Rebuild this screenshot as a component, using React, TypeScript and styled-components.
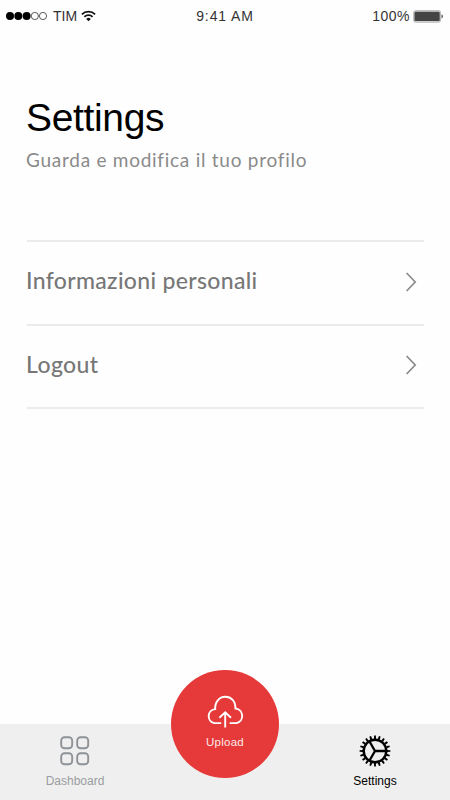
import React from "react";
import styled, { createGlobalStyle } from "styled-components";

const GlobalStyle = createGlobalStyle`
  * { box-sizing: border-box; }
  body { margin: 0; background: #fefefe; }
`;

const Screen = styled.div`
  width: 450px;
  height: 800px;
  display: flex;
  flex-direction: column;
  overflow: hidden;
  background: #fefefe;
  font-family: "Liberation Sans", Arial, sans-serif;
  color: #000;
`;

const StatusBar = styled.header`
  height: 32px;
  padding: 0 6px;
  display: grid;
  grid-template-columns: 1fr auto 1fr;
  align-items: center;
  font-size: 14px;
  line-height: 32px;
  color: #333;
`;

const StatusGroup = styled.div<{ $end?: boolean }>`
  display: flex;
  align-items: center;
  justify-content: ${(p) => (p.$end ? "flex-end" : "flex-start")};
`;

const StatusText = styled.span<{ $spacing: number }>`
  letter-spacing: ${(p) => p.$spacing}px;
`;

const Carrier = styled(StatusText)`
  margin: 0 4px 0 6px;
`;

const Battery = styled.svg`
  margin-left: 3px;
`;

const Heading = styled.div`
  padding: 62px 26px 0;
  height: 208px;
`;

const Title = styled.h1`
  margin: 0;
  font-size: 39px;
  line-height: 48px;
  font-weight: 400;
  letter-spacing: -0.35px;
`;

const Subtitle = styled.p`
  margin: 6px 0 0;
  font: 400 19px/24px Lato, sans-serif;
  letter-spacing: 0.74px;
  color: #8a8a8a;
`;

const List = styled.ul`
  list-style: none;
  margin: 0 26px 0 27px;
  padding: 0;
  flex: 1;
`;

const Item = styled.li`
  height: 83.5px;
  border-top: 2px solid #ebebeb;
  display: flex;
  align-items: center;
  justify-content: space-between;
  padding: 0 7px 2px 0;
  &:last-child {
    height: 85.5px;
    border-bottom: 2px solid #ebebeb;
  }
`;

const ItemLabel = styled.span<{ $spacing: number }>`
  margin: -3px 0 0 -1px;
  font: 500 23px/28px Lato, sans-serif;
  letter-spacing: ${(p) => p.$spacing}px;
  color: #777;
`;

const TabBar = styled.nav`
  height: 76px;
  background: #efefef;
  display: grid;
  grid-template-columns: repeat(3, 1fr);
  justify-items: center;
`;

const Tab = styled.div<{ $active?: boolean }>`
  display: flex;
  flex-direction: column;
  align-items: center;
  padding-top: 11px;
  color: ${(p) => (p.$active ? "#000" : "#9a9da0")};
`;

const TabLabel = styled.span<{ $spacing: number }>`
  font-size: 12px;
  line-height: 16px;
  margin-top: 6px;
  letter-spacing: ${(p) => p.$spacing}px;
`;

const UploadButton = styled.div`
  width: 108px;
  height: 108px;
  margin-top: -54.5px;
  border-radius: 50%;
  background: #e53a39;
  color: #fff;
  display: flex;
  flex-direction: column;
  align-items: center;
  padding-top: 25.5px;
`;

const UploadLabel = styled.span`
  font-size: 11.5px;
  line-height: 16px;
  margin-top: 5px;
  letter-spacing: 0.25px;
  color: #fde8e8;
`;

const SignalDots = () => (
  <svg width="41" height="10" viewBox="0 0 41 10">
    {[4, 12.3, 20.6].map((x) => (
      <circle key={x} cx={x} cy="5" r="4" fill="#000" />
    ))}
    {[28.8, 37].map((x) => (
      <circle key={x} cx={x} cy="5" r="3.6" fill="none" stroke="#333" strokeWidth=".8" />
    ))}
  </svg>
);

const Wifi = () => (
  <svg width="15" height="12" viewBox="0 0 15 12" fill="none" stroke="#111" strokeWidth="1.8">
    <path d="M.9 4.3a9.3 9.3 0 0 1 13.2 0M3.4 6.9a5.8 5.8 0 0 1 8.2 0" />
    <path d="M7.5 11.2 5.2 8.9a3.3 3.3 0 0 1 4.6 0Z" fill="#111" stroke="none" />
  </svg>
);

const Chevron = () => (
  <svg width="12" height="20" viewBox="0 0 12 20" fill="none" stroke="#8b8b8d" strokeWidth="1.7">
    <path d="M1.6 1 L10.2 10 L1.6 19" />
  </svg>
);

const GridIcon = () => (
  <svg width="32" height="32" viewBox="0 0 32 32" fill="none" stroke="#8f9397" strokeWidth="1.9">
    {[2.2, 18.2].map((x) =>
      [2.3, 18.3].map((y) => (
        <rect key={`${x}-${y}`} x={x} y={y} width="11" height="11" rx="3.4" />
      ))
    )}
  </svg>
);

const TEETH = 20;

const GearIcon = () => (
  <svg width="32" height="32" viewBox="-16 -16 32 32" fill="none" stroke="#000">
    <circle r="11.3" strokeWidth="2.4" />
    <path d="M0 0H11M0 0L-5.6 -9.7M0 0L-5.6 9.7" strokeWidth="2.3" />
    {Array.from({ length: TEETH }, (_, i) => (
      <path
        key={i}
        d="M12 -1.1L15.4 -.85V.85L12 1.1Z"
        fill="#000"
        stroke="none"
        transform={`rotate(${(i * 360) / TEETH})`}
      />
    ))}
  </svg>
);

const CloudIcon = () => (
  <svg width="40" height="34" viewBox="205 695 40 34" fill="none" stroke="#fff" strokeWidth="1.9">
    <path d="M221.2 723.1H214.2A7.1 7.1 0 0 1 215.2 709.1C214.8 702 219.2 696.8 225.2 696.8C231.2 696.8 235.7 701 235.4 708.5A7.4 7.4 0 0 1 236.4 723.1H229.6" />
    <path d="M225.2 727.6V712.8M219.4 717.8L225.2 712.4L231 717.8" />
  </svg>
);

const items = [
  { label: "Informazioni personali", spacing: 0.33 },
  { label: "Logout", spacing: 0.4 },
];

export default function App() {
  return (
    <Screen>
      <GlobalStyle />
      <StatusBar>
        <StatusGroup>
          <SignalDots />
          <Carrier $spacing={0}>TIM</Carrier>
          <Wifi />
        </StatusGroup>
        <StatusText $spacing={0.9}>9:41 AM</StatusText>
        <StatusGroup $end>
          <StatusText $spacing={0.5}>100%</StatusText>
          <Battery width="31" height="13" viewBox="0 0 31 13">
            <rect x=".6" y=".6" width="27" height="11.6" rx="2" fill="#d8d8d8" stroke="#aaa" strokeWidth=".8" />
            <rect x="1.5" y="1.7" width="25.2" height="9.4" rx="1.2" fill="#444" />
            <path d="M28.6 4.2Q31 6.4 28.6 8.6Z" fill="#222" />
          </Battery>
        </StatusGroup>
      </StatusBar>
      <Heading>
        <Title>Settings</Title>
        <Subtitle>Guarda e modifica il tuo profilo</Subtitle>
      </Heading>
      <List>
        {items.map((item) => (
          <Item key={item.label}>
            <ItemLabel $spacing={item.spacing}>{item.label}</ItemLabel>
            <Chevron />
          </Item>
        ))}
      </List>
      <TabBar>
        <Tab>
          <GridIcon />
          <TabLabel $spacing={0}>Dashboard</TabLabel>
        </Tab>
        <UploadButton>
          <CloudIcon />
          <UploadLabel>Upload</UploadLabel>
        </UploadButton>
        <Tab $active>
          <GearIcon />
          <TabLabel $spacing={0}>Settings</TabLabel>
        </Tab>
      </TabBar>
    </Screen>
  );
}
